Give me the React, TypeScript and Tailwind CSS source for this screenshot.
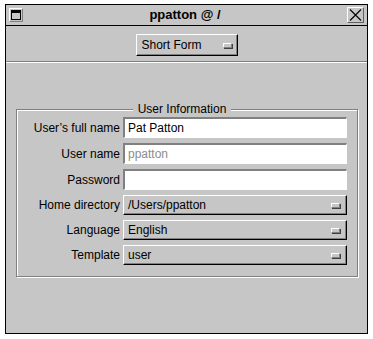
const font = { fontFamily: '"Liberation Sans", Arial, sans-serif' };

const Knob = () => (
  <span className="block w-[9px] h-[5px] bg-[#c6c6c6] border-t border-l border-t-white border-l-white border-b border-r border-b-[#808080] border-r-[#808080] shadow-[1px_1px_0_#404040]" />
);

const TextField = ({ value, muted }: { value: string; muted?: boolean }) => (
  <div className="h-[21px] bg-white border-t-2 border-l-2 border-t-[#808080] border-l-[#808080] border-b border-r border-b-white border-r-white flex items-center pl-[3px]">
    <span className={muted ? "text-[#8c8c8c]" : "text-black"}>{value}</span>
  </div>
);

const Dropdown = ({ value }: { value: string }) => (
  <div className="h-[20px] bg-[#c6c6c6] border-t border-l border-t-white border-l-white border-b border-r border-b-black border-r-black shadow-[inset_-1px_-1px_0_#808080] flex items-center justify-between pl-[4px] pr-[6px]">
    <span>{value}</span>
    <Knob />
  </div>
);

const rows: { label: string; field: React.ReactNode }[] = [
  { label: "User’s full name", field: <TextField value="Pat Patton" /> },
  { label: "User name", field: <TextField value="ppatton" muted /> },
  { label: "Password", field: <TextField value="" /> },
  { label: "Home directory", field: <Dropdown value="/Users/ppatton" /> },
  { label: "Language", field: <Dropdown value="English" /> },
  { label: "Template", field: <Dropdown value="user" /> },
];

export default function App() {
  return (
    <div className="w-[373px] h-[339px] bg-white pt-[4px] pl-[5px] text-[12px] text-black" style={font}>
      <div className="w-[363px] h-[330px] border border-black bg-[#c6c6c6] flex flex-col">
        {/* title bar */}
        <div className="h-[21px] border-b border-black flex items-center justify-between px-[3px] shrink-0">
          <div className="w-[14px] h-[14px] border-t border-l border-t-white border-l-white border-b border-r border-b-[#808080] border-r-[#808080] p-[1px]">
            <div className="w-full h-full border border-black border-t-[3px] bg-[#c6c6c6]" />
          </div>
          <span className="font-bold text-[13px]">ppatton @ /</span>
          <div className="w-[17px] h-[16px] border-t border-l border-t-white border-l-white border-b border-r border-b-[#606060] border-r-[#606060] flex items-center justify-center">
            <svg width="13" height="12" viewBox="0 0 13 12">
              <path d="M1 0.5 L12 11.5 M12 0.5 L1 11.5" stroke="#000" strokeWidth="1.1" fill="none" />
            </svg>
          </div>
        </div>

        {/* form selector */}
        <div className="flex justify-center pt-[8px] shrink-0">
          <div className="w-[102px] h-[22px] border-t border-l border-t-white border-l-white border-b border-r border-b-black border-r-black shadow-[inset_-1px_-1px_0_#808080] flex items-center justify-between pl-[5px] pr-[5px]">
            <span>Short Form</span>
            <Knob />
          </div>
        </div>

        <div className="mt-[5px] border-t border-t-[#808080] border-b border-b-white shrink-0" />

        {/* user information group */}
        <fieldset className="mt-[39px] ml-[10px] mr-[9px] border border-[#808080] shadow-[inset_1px_1px_0_#fff,1px_1px_0_#fff] pr-[10px] pb-[11px]">
          <legend className="mx-auto px-[5px] leading-[14px] bg-[#c6c6c6]">User Information</legend>
          <div className="grid grid-cols-[103px_1fr] gap-x-[3px] gap-y-[5px] pt-[1px]">
            {rows.map((r) => (
              <div key={r.label} className="contents">
                <div className="flex items-center justify-end">{r.label}</div>
                {r.field}
              </div>
            ))}
          </div>
        </fieldset>
      </div>
    </div>
  );
}
